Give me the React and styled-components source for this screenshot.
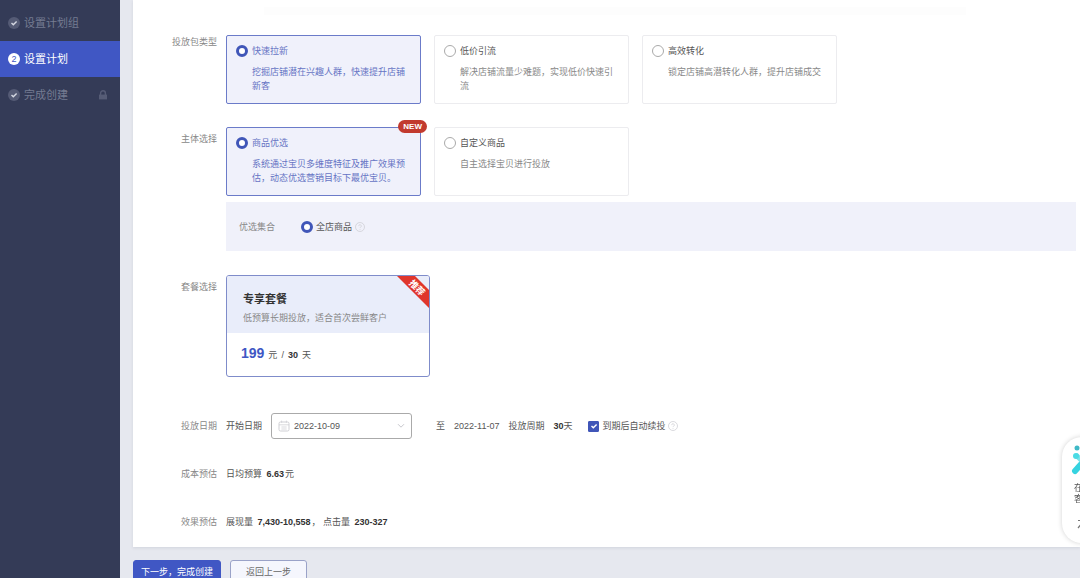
import { useState } from "react";
import styled, { createGlobalStyle, css } from "styled-components";

const packTypes = [
  { id: "new", title: "快速拉新", desc: "挖掘店铺潜在兴趣人群，快速提升店铺新客" },
  { id: "cheap", title: "低价引流", desc: "解决店铺流量少难题，实现低价快速引流" },
  { id: "convert", title: "高效转化", desc: "锁定店铺高潜转化人群，提升店铺成交" },
];

const subjects = [
  {
    id: "auto",
    title: "商品优选",
    desc: "系统通过宝贝多维度特征及推广效果预估，动态优选营销目标下最优宝贝。",
    badge: "NEW",
  },
  { id: "custom", title: "自定义商品", desc: "自主选择宝贝进行投放" },
];

const CheckMark = () => (
  <svg width="8" height="8" viewBox="0 0 8 8" fill="none" aria-hidden="true">
    <path d="M1.5 4 3.3 5.8 6.6 2.4" stroke="currentColor" strokeWidth="1.4" />
  </svg>
);

const LockIcon = () => (
  <svg width="10" height="10" viewBox="0 0 10 10" fill="none" aria-hidden="true">
    <path d="M2.6 5V3.2a2.4 2.4 0 0 1 4.8 0V5" stroke="currentColor" strokeWidth="1.4" />
    <path d="M1 4.6h8v4.8H1z" fill="currentColor" />
  </svg>
);

const HelpIcon = () => (
  <svg width="10" height="10" viewBox="0 0 10 10" fill="none" aria-hidden="true">
    <circle cx="5" cy="5" r="4.5" stroke="#d0d0d6" strokeWidth="0.8" />
    <path d="M3.7 4.1a1.3 1.3 0 1 1 1.9 1.1c-.4.2-.6.4-.6.9M5 7v.8" stroke="#d0d0d6" strokeWidth="0.8" />
  </svg>
);

const CalendarIcon = () => (
  <svg width="12" height="12" viewBox="0 0 12 12" fill="none" stroke="#cfcfd4" aria-hidden="true">
    <rect x="1" y="2" width="10" height="9" rx="1.5" />
    <path d="M1 4.8h10M3.6.6v2.2M8.4.6v2.2M3.4 7h5.2M3.4 9h5.2" strokeWidth="0.8" />
  </svg>
);

const ChevronIcon = () => (
  <svg width="8" height="6" viewBox="0 0 8 6" fill="none" aria-hidden="true">
    <path d="m1 1.2 3 3 3-3" stroke="#c0c0c6" strokeWidth="0.9" />
  </svg>
);

const ServiceIcon = () => (
  <svg width="24" height="30" viewBox="0 0 24 30" fill="none" aria-hidden="true">
    <path d="M4 26 20 8" stroke="#35d3e0" strokeWidth="6" strokeLinecap="round" />
    <path d="m6 11 13 13" stroke="#7be3ea" strokeWidth="5" strokeLinecap="round" />
    <circle cx="6" cy="3" r="2.5" fill="#3fb9c6" />
    <circle cx="5" cy="11" r="3" fill="#4bdbe4" />
  </svg>
);

const CollapseIcon = () => (
  <svg width="12" height="10" viewBox="0 0 12 10" fill="none" aria-hidden="true">
    <path d="M1 1.5h10M1 9l5-6 5 6" stroke="#777" strokeWidth="1.2" />
  </svg>
);

const OptionGroup = ({ name, options, value, onChange }) => (
  <Options role="radiogroup">
    {options.map((item) => (
      <OptionCard key={item.id} $active={value === item.id}>
        <Radio name={name} checked={value === item.id} onChange={() => onChange(item.id)} />
        <div>
          <OptionTitle $active={value === item.id}>{item.title}</OptionTitle>
          <div>{item.desc}</div>
        </div>
        {item.badge && <Badge>{item.badge}</Badge>}
      </OptionCard>
    ))}
  </Options>
);

const App = () => {
  const [packType, setPackType] = useState("new");
  const [subject, setSubject] = useState("auto");
  const [startDate, setStartDate] = useState("2022-10-09");
  const [renew, setRenew] = useState(true);

  return (
    <>
      <GlobalStyle />
      <Page>
        <Sidebar>
          <Step href="#group">
            <StepDot><CheckMark /></StepDot>
            设置计划组
          </Step>
          <Step href="#plan" $active>
            <StepDot $active>2</StepDot>
            设置计划
          </Step>
          <Step href="#done">
            <StepDot><CheckMark /></StepDot>
            完成创建
            <StepLock><LockIcon /></StepLock>
          </Step>
        </Sidebar>

        <Main>
          <Panel>
            <PreviousSection />

            <Row $gap={23}>
              <RowLabel>投放包类型</RowLabel>
              <OptionGroup name="pack" options={packTypes} value={packType} onChange={setPackType} />
            </Row>

            <Row $gap={24}>
              <RowLabel $offset={5}>主体选择</RowLabel>
              <div>
                <OptionGroup name="subject" options={subjects} value={subject} onChange={setSubject} />
                <SubPanel>
                  <SubLabel>优选集合</SubLabel>
                  <Inline>
                    <Radio name="scope" defaultChecked />
                    全店商品
                    <HelpIcon />
                  </Inline>
                </SubPanel>
              </div>
            </Row>

            <Row $gap={36}>
              <RowLabel $offset={5}>套餐选择</RowLabel>
              <Package type="button">
                <PackageHead>
                  <PackageTitle>专享套餐</PackageTitle>
                  <PackageDesc>低预算长期投放，适合首次尝鲜客户</PackageDesc>
                </PackageHead>
                <PackagePrice>
                  <Price>199</Price>
                  <span>元</span>
                  <span>/</span>
                  <b>30</b>
                  <span>天</span>
                </PackagePrice>
                <Ribbon width="32" height="32" viewBox="0 0 32 32">
                  <path d="M0 0h18l14 14v18z" fill="#e0362c" />
                  <text x="20" y="15" transform="rotate(45 20 12)" textAnchor="middle">推荐</text>
                </Ribbon>
              </Package>
            </Row>

            <Row $gap={28} $center>
              <RowLabel>投放日期</RowLabel>
              <DateLine>
                <label htmlFor="start-date">开始日期</label>
                <DateBox>
                  <CalendarIcon />
                  <DateInput
                    id="start-date"
                    value={startDate}
                    onChange={(e) => setStartDate(e.target.value)}
                  />
                  <ChevronIcon />
                </DateBox>
                <Period>
                  <span>至</span>
                  <span>2022-11-07</span>
                  <span>投放周期</span>
                  <span><b>30</b>天</span>
                </Period>
                <Inline>
                  <Checkbox>
                    <input type="checkbox" checked={renew} onChange={() => setRenew(!renew)} />
                    {renew && <CheckMark />}
                  </Checkbox>
                  到期后自动续投
                  <HelpIcon />
                </Inline>
              </DateLine>
            </Row>

            <Row $gap={34} $center>
              <RowLabel>成本预估</RowLabel>
              <Estimate>
                日均预算 <b>6.63</b>元
              </Estimate>
            </Row>

            <Row $gap={0} $center>
              <RowLabel>效果预估</RowLabel>
              <Estimate>
                展现量 <b>7,430-10,558</b>， 点击量 <b>230-327</b>
              </Estimate>
            </Row>
          </Panel>

          <Actions>
            <ActionButton type="button" $primary>下一步，完成创建</ActionButton>
            <ActionButton type="button">返回上一步</ActionButton>
          </Actions>
        </Main>

        <Service type="button">
          <ServiceIcon />
          <ServiceText>在线<br />客服</ServiceText>
          <CollapseIcon />
        </Service>
      </Page>
    </>
  );
};

export default App;

const GlobalStyle = createGlobalStyle`
  * {
    box-sizing: border-box;
  }

  body {
    margin: 0;
    overflow: hidden;
    background: #e6e8ef;
    color: #555;
    font: 9px/14px "Liberation Sans", "Noto Sans CJK SC", sans-serif;
  }

  button, input {
    font: inherit;
    color: inherit;
  }

  b {
    color: #333;
  }
`;

const Page = styled.div`
  display: grid;
  grid-template-columns: 120px minmax(0, 1fr);
  height: 100vh;
`;

const Sidebar = styled.nav`
  background: #343b57;
  padding-top: 5px;
`;

const Step = styled.a`
  position: relative;
  display: flex;
  align-items: center;
  gap: 4px;
  height: 36px;
  padding: 0 12px 0 8px;
  font-size: 11px;
  color: #757b92;
  text-decoration: none;

  /* line between two step dots */
  & + &::before {
    content: "";
    position: absolute;
    left: 14px;
    top: -12px;
    width: 1px;
    height: 24px;
    background: #565d78;
  }

  ${({ $active }) => $active && css`
    background: #4057c4;
    color: #fff;
  `}
`;

const StepDot = styled.span`
  position: relative;
  z-index: 1;
  display: flex;
  align-items: center;
  justify-content: center;
  width: 12px;
  height: 12px;
  border-radius: 50%;
  font-size: 9px;
  background: ${({ $active }) => ($active ? "#fff" : "#555b75")};
  color: ${({ $active }) => ($active ? "#4057c4" : "#d5d8e2")};
`;

const StepLock = styled.span`
  display: flex;
  margin-left: auto;
  color: #565c76;
`;

const Main = styled.main`
  padding-left: 13px;
  overflow: hidden;
`;

const Panel = styled.section`
  padding: 0 4px 18px 0;
  background: #fff;
  box-shadow: 0 1px 3px rgba(60, 66, 90, 0.12);
`;

const PreviousSection = styled.div`
  height: 15px;
  margin: 0 110px 20px 131px;
  border-bottom: 8px solid #fdfdfd;
`;

const Row = styled.div`
  display: grid;
  grid-template-columns: 84px minmax(0, 1fr);
  column-gap: 9px;
  align-items: ${({ $center }) => ($center ? "center" : "start")};
  margin-bottom: ${({ $gap }) => $gap}px;
`;

const RowLabel = styled.div`
  padding-top: ${({ $offset = 0 }) => $offset}px;
  text-align: right;
  color: #888;
`;

const Options = styled.div`
  display: flex;
  gap: 13px;
`;

const OptionCard = styled.label`
  position: relative;
  display: flex;
  gap: 4px;
  width: 195px;
  min-height: 69px;
  padding: 8px 8px 8px 9px;
  border: 1px solid #ececef;
  border-radius: 2px;
  background: #fff;
  color: #888;

  ${({ $active }) => $active && css`
    border-color: #6b7bc9;
    background: #f0f1fb;
    color: #6674c4;
  `}
`;

const OptionTitle = styled.div`
  margin-bottom: 7px;
  color: ${({ $active }) => ($active ? "inherit" : "#555")};
`;

const Radio = styled.input.attrs({ type: "radio" })`
  appearance: none;
  flex: none;
  width: 12px;
  height: 12px;
  margin: 1px 0;
  border: 1px solid #aaa;
  border-radius: 50%;
  background: #fff;

  &:checked {
    border: 3px solid #4056b8;
  }
`;

const Badge = styled.span`
  position: absolute;
  top: -8px;
  right: -7px;
  padding: 0 5px;
  border-radius: 7px;
  background: #c23a2e;
  color: #fff;
  font-size: 8px;
  font-weight: bold;
  line-height: 13px;
`;

const SubPanel = styled.div`
  display: flex;
  align-items: center;
  gap: 26px;
  height: 49px;
  margin-top: 6px;
  padding-left: 13px;
  background: #f0f1fa;
`;

const SubLabel = styled.span`
  color: #888;
`;

const Inline = styled.label`
  display: flex;
  align-items: center;
  gap: 3px;
`;

const Package = styled.button`
  position: relative;
  width: 204px;
  padding: 0;
  border: 1px solid #7f8cca;
  border-radius: 3px;
  background: #fff;
  text-align: left;
  overflow: hidden;
`;

const PackageHead = styled.div`
  padding: 16px 16px 8px;
  background: #e9edfa;
`;

const PackageTitle = styled.div`
  margin-bottom: 5px;
  font-size: 11px;
  font-weight: bold;
  color: #333;
`;

const PackageDesc = styled.div`
  color: #888;
`;

const PackagePrice = styled.div`
  display: flex;
  align-items: baseline;
  gap: 4px;
  padding: 11px 14px 12px;
  line-height: 18px;
`;

const Price = styled.strong`
  font-size: 14px;
  color: #4057c4;
`;

const Ribbon = styled.svg`
  position: absolute;
  top: 0;
  right: 0;

  text {
    font-size: 9px;
    font-weight: bold;
    fill: #fff;
  }
`;

const DateLine = styled.div`
  display: flex;
  align-items: center;
`;

const DateBox = styled.div`
  display: flex;
  align-items: center;
  gap: 4px;
  width: 141px;
  height: 26px;
  margin: 0 24px 0 9px;
  padding: 0 6px;
  border: 1px solid #aaa;
  border-radius: 3px;
`;

const DateInput = styled.input`
  flex: 1;
  min-width: 0;
  padding: 0;
  border: 0;
  outline: 0;
  background: none;
`;

const Period = styled.div`
  display: flex;
  gap: 9px;
  margin-right: 16px;
`;

const Checkbox = styled.span`
  position: relative;
  display: flex;
  color: #fff;

  input {
    appearance: none;
    width: 11px;
    height: 11px;
    margin: 0;
    border: 1px solid #4056b8;
    border-radius: 1px;
  }

  input:checked {
    background: #4056b8;
  }

  svg {
    position: absolute;
    inset: 0;
    margin: auto;
  }
`;

const Estimate = styled.div`
  b {
    margin: 0 1px 0 2px;
  }
`;

const Actions = styled.div`
  display: flex;
  gap: 9px;
  padding-top: 13px;
`;

const ActionButton = styled.button`
  height: 24px;
  padding: 0 ${({ $primary }) => ($primary ? 7 : 15)}px;
  border: 1px solid ${({ $primary }) => ($primary ? "#4057c4" : "#9aa2c8")};
  border-radius: 3px;
  background: ${({ $primary }) => ($primary ? "#4057c4" : "#f5f6fd")};
  color: ${({ $primary }) => ($primary ? "#fff" : "#666")};
`;

/* docked to the window edge, partly hidden until opened */
const Service = styled.button`
  position: fixed;
  right: -24px;
  bottom: 35px;
  display: flex;
  flex-direction: column;
  align-items: center;
  gap: 8px;
  width: 42px;
  padding: 8px 0 14px;
  border: 0;
  border-radius: 20px;
  background: #fff;
  box-shadow: 0 0 5px rgba(0, 0, 0, 0.18);
`;

const ServiceText = styled.span`
  margin-bottom: 6px;
  line-height: 11px;
`;
